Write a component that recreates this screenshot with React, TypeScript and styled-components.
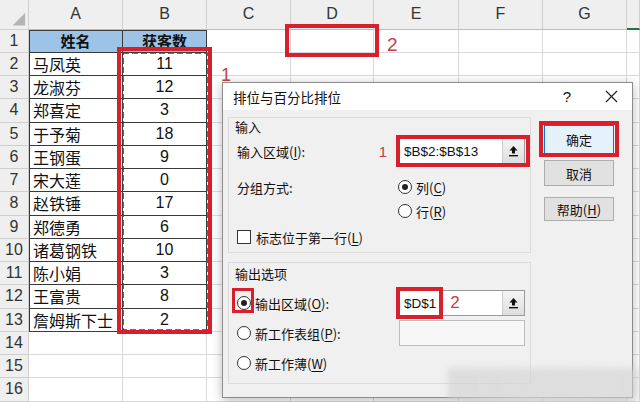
import React from 'react';
import styled, { createGlobalStyle, css } from 'styled-components';

const GlobalStyle = createGlobalStyle`
  html, body {
    margin: 0;
    padding: 0;
    background: #fff;
    overflow: hidden;
  }
  body {
    font-family: 'Liberation Sans', 'Noto Sans CJK SC', sans-serif;
  }
`;

const RED = '#d7202c';
const NOTE = '#c0414a';

const Page = styled.div`
  position: relative;
  width: 640px;
  height: 402px;
  overflow: hidden;
`;

/* ---------- sheet ---------- */

const Sheet = styled.div`
  display: grid;
  grid-template-columns: 29px 94px 84px 84px 83px 85px 84px 84px 1fr;
  grid-template-rows: 29.5px repeat(16, 23.25px);
  width: 640px;
`;

type CellKind = 'corner' | 'col' | 'row' | 'cell';

const Cell = styled.div<{
  $kind: CellKind;
  $boxed?: boolean;
  $left?: boolean;
  $top?: boolean;
  $head?: boolean;
  $center?: boolean;
  $active?: boolean;
}>`
  box-sizing: border-box;
  display: flex;
  align-items: center;
  justify-content: ${({ $center }) => ($center ? 'center' : 'flex-start')};
  padding: 0 4px;
  font-family: 'Liberation Sans', 'Noto Sans CJK SC', sans-serif;
  font-size: 16px;
  color: #111;
  white-space: nowrap;
  border-right: 1px solid #d9d9d9;
  border-bottom: 1px solid #d9d9d9;
  ${({ $kind }) =>
    ($kind === 'col' || $kind === 'row' || $kind === 'corner') &&
    css`
      background: #efefef;
      color: #333;
      justify-content: center;
      border-right-color: #cfcfcf;
      border-bottom-color: #cfcfcf;
      padding: 0;
    `}
  ${({ $kind }) =>
    $kind === 'col' &&
    css`
      border-bottom-color: #bdbdbd;
    `}
  ${({ $active }) =>
    $active &&
    css`
      border-bottom: 2px solid #217346;
    `}
  ${({ $boxed }) =>
    $boxed &&
    css`
      border-right-color: #3a3a3a;
      border-bottom-color: #3a3a3a;
    `}
  ${({ $left, $top }) =>
    ($left || $top) &&
    css`
      box-shadow: ${$left ? 'inset 1px 0 0 #3a3a3a' : ''}${$left && $top ? ',' : ''}${$top
        ? 'inset 0 1px 0 #3a3a3a'
        : ''};
    `}
  ${({ $head }) =>
    $head &&
    css`
      background: #9dc3e6;
      font-weight: bold;
      font-size: 15px;
    `}
`;

const CornerMark = styled.svg`
  width: 29px;
  height: 29px;
`;

/* ---------- annotations ---------- */

const RedBox = styled.div<{ $x: number; $y: number; $w: number; $h: number; $t?: number }>`
  position: absolute;
  left: ${({ $x }) => $x}px;
  top: ${({ $y }) => $y}px;
  width: ${({ $w }) => $w}px;
  height: ${({ $h }) => $h}px;
  box-sizing: border-box;
  border: ${({ $t }) => $t ?? 4}px solid ${RED};
  pointer-events: none;
`;

const Note = styled.span<{ $x: number; $y: number; $size?: number }>`
  position: absolute;
  left: ${({ $x }) => $x}px;
  top: ${({ $y }) => $y}px;
  font-family: 'Liberation Sans', sans-serif;
  font-size: ${({ $size }) => $size ?? 18}px;
  line-height: 1;
  color: ${NOTE};
`;

const Ants = styled.svg`
  position: absolute;
  left: 121px;
  top: 51px;
`;

const Watermark = styled.div`
  position: absolute;
  left: 448px;
  top: 368px;
  width: 190px;
  height: 34px;
  background: linear-gradient(90deg, rgba(205, 205, 205, 0.55), rgba(215, 215, 215, 0.75) 40%, rgba(210, 210, 210, 0.6));
  filter: blur(3px);
`;

/* ---------- dialog ---------- */

const Dialog = styled.div`
  position: absolute;
  left: 222px;
  top: 82px;
  width: 411px;
  height: 316px;
  box-sizing: border-box;
  background: #f0f0f0;
  border: 1px solid #8c8c8c;
  box-shadow: 0 2px 10px rgba(0, 0, 0, 0.28);
  font-family: 'Noto Sans CJK SC', 'Liberation Sans', sans-serif;
  font-size: 13px;
  color: #111;
`;

const TitleBar = styled.div`
  display: flex;
  align-items: center;
  height: 27px;
  padding: 0 14px 0 10px;
  background: #fff;
`;

const Title = styled.div`
  flex: 1;
  font-size: 13.5px;
`;

const Help = styled.span`
  font-family: 'Liberation Sans', sans-serif;
  font-size: 15px;
  margin-right: 34px;
`;

const Body = styled.div`
  display: flex;
  padding: 7px 0 0 5px;
`;

const LeftCol = styled.div`
  display: flex;
  flex-direction: column;
  gap: 9px;
  width: 303px;
`;

const Group = styled.div<{ $h: number }>`
  box-sizing: border-box;
  height: ${({ $h }) => $h}px;
  border: 1px solid #dcdcdc;
  background: #f0f0f0;
  padding: 0 5px 0 8px;
  display: flex;
  flex-direction: column;
`;

const Legend = styled.div<{ $pt?: number }>`
  line-height: 18px;
  padding-top: ${({ $pt }) => $pt ?? 0}px;
  margin-left: -2px;
`;

const Row = styled.div<{ $h: number; $mt: number }>`
  display: flex;
  align-items: center;
  height: ${({ $h }) => $h}px;
  margin-top: ${({ $mt }) => $mt}px;
`;

const Label = styled.div<{ $w?: number }>`
  width: ${({ $w }) => ($w ? `${$w}px` : 'auto')};
  flex: ${({ $w }) => ($w ? 'none' : '1')};
  white-space: nowrap;
`;

const InlineNote = styled.span`
  font-family: 'Liberation Sans', sans-serif;
  font-size: 15px;
  color: ${NOTE};
  margin-right: 12px;
`;

const Key = styled.u`
  text-underline-offset: 2px;
`;

const Radio = styled.span<{ $on?: boolean }>`
  position: relative;
  box-sizing: border-box;
  width: 14px;
  height: 14px;
  border-radius: 50%;
  border: 1px solid #333;
  background: #fff;
  margin-right: 4px;
  flex: none;
  ${({ $on }) =>
    $on &&
    css`
      &::after {
        content: '';
        position: absolute;
        left: 3px;
        top: 3px;
        width: 6px;
        height: 6px;
        border-radius: 50%;
        background: #222;
      }
    `}
`;

const Check = styled.span`
  box-sizing: border-box;
  width: 14px;
  height: 14px;
  border: 1px solid #333;
  background: #fff;
  margin-right: 5px;
  flex: none;
`;

const Marked = styled.span`
  position: relative;
  display: inline-flex;
  &::before {
    content: '';
    position: absolute;
    left: -5px;
    top: -8px;
    width: 22px;
    height: 25px;
    box-sizing: border-box;
    border: 3px solid ${RED};
  }
`;

const Field = styled.div<{ $disabled?: boolean; $ml?: number }>`
  position: relative;
  box-sizing: border-box;
  display: flex;
  align-items: center;
  width: 126px;
  height: 26px;
  margin-left: ${({ $ml }) => $ml ?? 0}px;
  background: ${({ $disabled }) => ($disabled ? '#f7f7f7' : '#fff')};
  border: 1px solid ${({ $disabled }) => ($disabled ? '#bdbdbd' : '#9a9a9a')};
  font-family: 'Liberation Sans', sans-serif;
  font-size: 13.5px;
  padding-left: 4px;
`;

const FieldText = styled.span`
  flex: 1;
`;

const FieldNote = styled.span`
  font-size: 17px;
  color: ${NOTE};
  margin-left: 14px;
`;

const Collapse = styled.div`
  display: flex;
  align-items: center;
  justify-content: center;
  width: 21px;
  height: 24px;
  border-left: 1px solid #cfcfcf;
  background: linear-gradient(#f4f4f4, #dedede);
`;

const FieldFrame = styled.div<{ $l: number; $w: number }>`
  position: absolute;
  left: ${({ $l }) => $l}px;
  top: -4px;
  bottom: -4px;
  width: ${({ $w }) => $w}px;
  box-sizing: border-box;
  border: 4px solid ${RED};
`;

const RightCol = styled.div`
  display: flex;
  flex-direction: column;
  margin-left: 13px;
  padding-top: 8px;
  width: 70px;
`;

const Button = styled.div<{ $primary?: boolean; $h: number; $mt?: number }>`
  position: relative;
  box-sizing: border-box;
  display: flex;
  align-items: center;
  justify-content: center;
  height: ${({ $h }) => $h}px;
  margin-top: ${({ $mt }) => $mt ?? 0}px;
  background: ${({ $primary }) => ($primary ? '#e5f1fb' : '#e1e1e1')};
  border: 1px solid ${({ $primary }) => ($primary ? '#0078d7' : '#adadad')};
  font-size: 13px;
  ${({ $primary }) =>
    $primary &&
    css`
      &::after {
        content: '';
        position: absolute;
        left: -6px;
        right: -6px;
        top: -5px;
        bottom: -4px;
        border: 4px solid ${RED};
      }
    `}
`;

const CollapseIcon: React.FC = () => (
  <svg width="11" height="12" viewBox="0 0 11 12">
    <path d="M5.5 1 L1.5 5.5 H4 V8.5 H7 V5.5 H9.5 Z" fill="#111" />
    <rect x="1" y="10" width="9" height="1.4" fill="#111" />
  </svg>
);

const CloseIcon: React.FC = () => (
  <svg width="13" height="13" viewBox="0 0 13 13">
    <path d="M1 1 L12 12 M12 1 L1 12" stroke="#222" strokeWidth="1.2" />
  </svg>
);

const people: [string, number][] = [
  ['马凤英', 11],
  ['龙淑芬', 12],
  ['郑喜定', 3],
  ['于予菊', 18],
  ['王钢蛋', 9],
  ['宋大莲', 0],
  ['赵铁锤', 17],
  ['郑德勇', 6],
  ['诸葛钢铁', 10],
  ['陈小娟', 3],
  ['王富贵', 8],
  ['詹姆斯下士', 2],
];

const letters = ['A', 'B', 'C', 'D', 'E', 'F', 'G', ''];

const SheetGrid: React.FC = () => {
  const rows: React.ReactNode[] = [];
  for (let r = 1; r <= 16; r++) {
    const p = r >= 2 && r <= 13 ? people[r - 2] : null;
    const boxed = r <= 13;
    rows.push(
      <React.Fragment key={r}>
        <Cell $kind="row">{r}</Cell>
        <Cell $kind="cell" $boxed={boxed} $left={boxed} $top={r === 1} $head={r === 1} $center={r === 1}>
          {r === 1 ? '姓名' : p ? p[0] : ''}
        </Cell>
        <Cell $kind="cell" $boxed={boxed} $top={r === 1} $head={r === 1} $center>
          {r === 1 ? '获客数' : p ? p[1] : ''}
        </Cell>
        {[0, 1, 2, 3, 4, 5].map((c) => (
          <Cell key={c} $kind="cell" />
        ))}
      </React.Fragment>
    );
  }
  return (
    <Sheet>
      <Cell $kind="corner">
        <CornerMark viewBox="0 0 29 29">
          <polygon points="26,13 26,26 13,26" fill="#b4b4b4" />
        </CornerMark>
      </Cell>
      {letters.map((l, i) => (
        <Cell key={i} $kind="col" $active={i === 7}>
          {l}
        </Cell>
      ))}
      {rows}
    </Sheet>
  );
};

const App: React.FC = () => (
  <Page>
    <GlobalStyle />
    <SheetGrid />

    <Ants width="88" height="281" viewBox="0 0 88 281">
      <rect x="2" y="2" width="84" height="277" fill="none" stroke="#2f4a4a" strokeWidth="1.6" strokeDasharray="6 3" />
    </Ants>
    <RedBox $x={117} $y={47} $w={95} $h={287} />
    <Note $x={221} $y={66} $size={18}>1</Note>
    <RedBox $x={285} $y={24} $w={94} $h={33} />
    <Note $x={387} $y={35} $size={19}>2</Note>

    <Dialog>
      <TitleBar>
        <Title>排位与百分比排位</Title>
        <Help>?</Help>
        <CloseIcon />
      </TitleBar>
      <Body>
        <LeftCol>
          <Group $h={136}>
            <Legend>输入</Legend>
            <Row $h={30} $mt={0}>
              <Label>
                输入区域(<Key>I</Key>):
              </Label>
              <InlineNote>1</InlineNote>
              <Field>
                <FieldText>$B$2:$B$13</FieldText>
                <Collapse>
                  <CollapseIcon />
                </Collapse>
                <FieldFrame $l={-4} $w={134} />
              </Field>
            </Row>
            <Row $h={20} $mt={11}>
              <Label $w={161}>分组方式:</Label>
              <Radio $on />
              列(<Key>C</Key>)
            </Row>
            <Row $h={20} $mt={4}>
              <Label $w={161} />
              <Radio />
              行(<Key>R</Key>)
            </Row>
            <Row $h={20} $mt={6}>
              <Check />
              标志位于第一行(<Key>L</Key>)
            </Row>
          </Group>
          <Group $h={122}>
            <Legend $pt={2}>输出选项</Legend>
            <Row $h={26} $mt={7}>
              <Marked>
                <Radio $on />
              </Marked>
              <Label>
                输出区域(<Key>O</Key>):
              </Label>
              <Field>
                <FieldText>
                  $D$1<FieldNote>2</FieldNote>
                </FieldText>
                <Collapse>
                  <CollapseIcon />
                </Collapse>
                <FieldFrame $l={-4} $w={47} />
              </Field>
            </Row>
            <Row $h={26} $mt={4}>
              <Radio />
              <Label>
                新工作表组(<Key>P</Key>):
              </Label>
              <Field $disabled />
            </Row>
            <Row $h={20} $mt={7}>
              <Radio />
              新工作薄(<Key>W</Key>)
            </Row>
          </Group>
        </LeftCol>
        <RightCol>
          <Button $primary $h={29}>
            确定
          </Button>
          <Button $h={26} $mt={6}>
            取消
          </Button>
          <Button $h={24} $mt={11}>
            帮助(<Key>H</Key>)
          </Button>
        </RightCol>
      </Body>
    </Dialog>
    <Watermark />
  </Page>
);

export default App;
